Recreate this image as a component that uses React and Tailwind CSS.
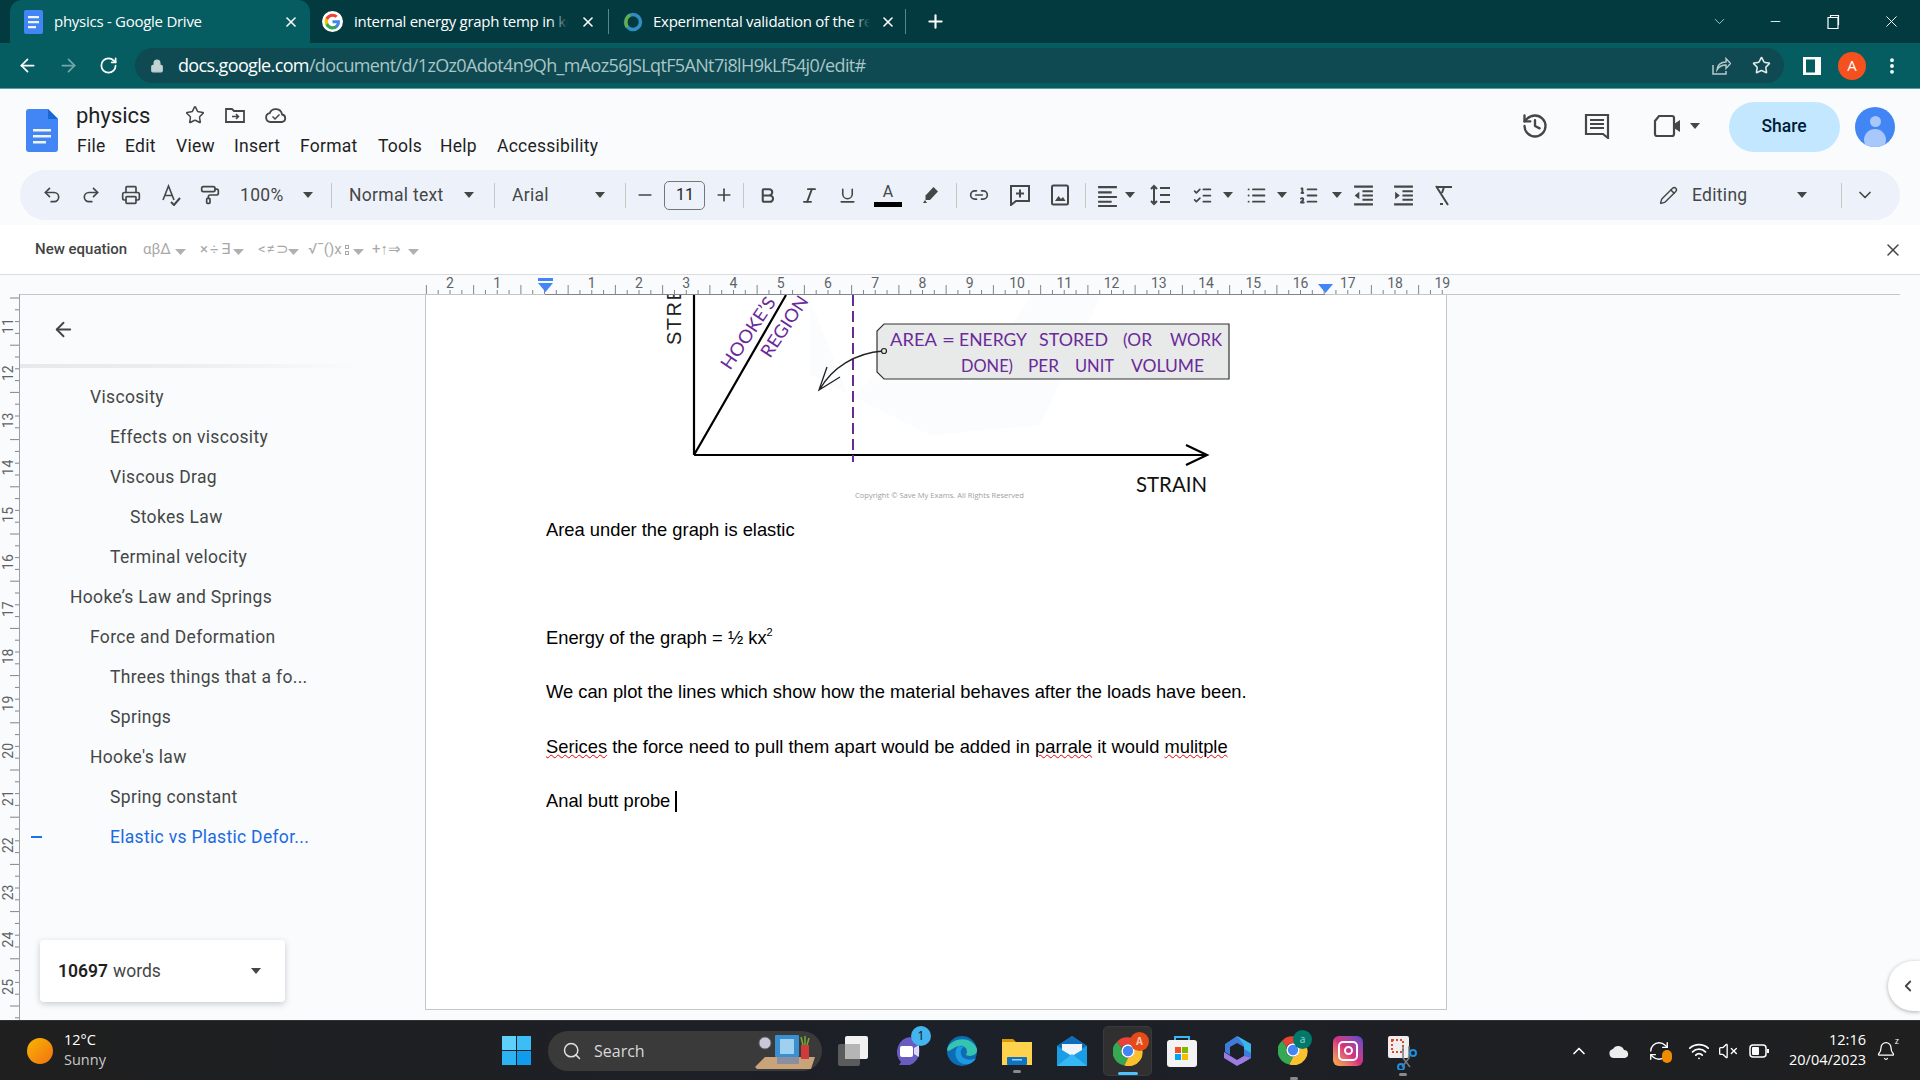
import React from "react";
import {
  ArrowLeft, ArrowRight, RotateCw, Lock, Star, Undo2, Redo2, Printer, Bold, Italic, Underline, Link2,
  Pencil, ChevronDown, X, Plus, Minus, Search, ChevronUp, Wifi, VolumeX, History, MoreVertical,
  ListChecks, List, ListOrdered, PaintRoller, ChevronLeft, Bell, RefreshCw,
} from "lucide-react";

const Caret = ({ className = "" }) => (
  <svg width="10" height="6" viewBox="0 0 10 6" className={`shrink-0 ${className}`}><path d="M0 0h10L5 6z" fill="#444746" /></svg>
);

const DocsGlyph = ({ w, h, tab }) => (
  <svg width={w} height={h} viewBox="0 0 32 43">
    <path d="M3 0h19l10 10v30a3 3 0 0 1-3 3H3a3 3 0 0 1-3-3V3a3 3 0 0 1 3-3z" fill="#4285f4" />
    {tab && <path d="M22 0l10 10H22z" fill="#1967d2" />}
    <path d="M7 20h18v2.600H7zM7 26h18v2.600H7zM7 32h13v2.600H7z" fill="#f1f3f4" />
  </svg>
);

const DriveTabIcon = () => (
  <svg width="19" height="24" viewBox="0 0 19 24" className="translate-x-[1px]">
    <rect width="19" height="24" rx="2" fill="#4285f4" />
    <path d="M4 6h11v2.200H4zM4 11h11v2.200H4zM4 16h8v2.200H4z" fill="#f1f3f4" />
  </svg>
);

const GoogleG = () => (
  <svg width="21" height="21" viewBox="0 0 48 48">
    <circle cx="24" cy="24" r="24" fill="#fff" />
    <path d="M41 24.500c0-1.300-.1-2.500-.3-3.600H24v6.900h9.600c-.4 2.200-1.700 4.100-3.500 5.300v4.400h5.700C39.100 34.400 41 29.900 41 24.500z" fill="#4285f4" />
    <path d="M24 42c4.700 0 8.700-1.600 11.800-4.300l-5.700-4.400c-1.600 1.100-3.600 1.700-6.100 1.700-4.600 0-8.500-3.100-9.900-7.300H8.200v4.600C11.200 38.100 17.100 42 24 42z" fill="#34a853" />
    <path d="M14.100 27.700c-.4-1.100-.6-2.300-.6-3.700s.2-2.500.6-3.700v-4.600H8.200C7 18.100 6.300 21 6.300 24s.7 5.900 1.900 8.300z" fill="#fbbc05" />
    <path d="M24 13c2.600 0 5 .9 6.800 2.700l5.100-5.100C32.800 7.700 28.700 6 24 6 17.100 6 11.200 9.900 8.200 15.700l5.900 4.600C15.500 16.100 19.400 13 24 13z" fill="#ea4335" />
  </svg>
);

const ScienceIcon = () => (
  <svg width="22" height="22" viewBox="0 0 22 22" className="translate-x-[2px]">
    <circle cx="11" cy="11" r="7.500" fill="none" stroke="#2f8fc2" strokeWidth="3.500" />
    <path d="M5 16C3 12 4 6 8 4" fill="none" stroke="#6cae3a" strokeWidth="3" />
  </svg>
);

const Tab = ({ active, icon, title, closeCls, wCls, divider }) => (
  <div className={`relative h-[43px] flex items-center shrink-0 ${wCls} ${active ? "bg-[#055c61] rounded-t-[12px]" : ""}`}>
    <div className="w-[44px] flex justify-center shrink-0">{icon}</div>
    <div className="relative flex-1 min-w-0 overflow-hidden whitespace-nowrap text-[15px] text-white font-['Open_Sans',sans-serif] tracking-[-0.27px]">
      {title}
      {!active && <div className="absolute right-0 top-0 bottom-0 w-[18px] bg-gradient-to-l from-[#033a40] to-transparent" />}
    </div>
    <X size={16} strokeWidth={2.400} className={`text-white shrink-0 ${closeCls}`} />
    {divider && <div className="absolute right-0 top-[9px] w-px h-[25px] bg-[#5c8589]" />}
  </div>
);

const TabStrip = () => (
  <div className="h-[43px] bg-[#033a40] flex pl-[10px] shrink-0">
    <Tab active wCls="w-[300px]" closeCls="mr-[11px] ml-[22px]" title="physics - Google Drive" icon={<DriveTabIcon />} />
    <Tab wCls="w-[299px]" closeCls="mr-[13px] ml-[12px]" divider title="internal energy graph temp in kelvin" icon={<GoogleG />} />
    <Tab wCls="w-[297px]" closeCls="mr-[10px] ml-[10px]" divider title="Experimental validation of the rel" icon={<ScienceIcon />} />
    <div className="w-[58px] flex justify-center items-center"><Plus size={21} strokeWidth={2.400} className="text-white" /></div>
    <div className="flex-1" />
    <ChevronDown size={17} strokeWidth={1.200} className="text-[#c8d6d8] self-center mr-[40px]" />
    <Minus size={15} strokeWidth={1.400} className="text-white self-center mr-[42px]" />
    <svg width="16" height="16" viewBox="0 0 16 16" className="self-center mr-[41px]"><path d="M3 3.500h10v11H3zM5.500 3.500V1.500h8V11" fill="none" stroke="#fff" strokeWidth="1.200" /></svg>
    <X size={19} strokeWidth={1.200} className="text-white self-center mr-[19px]" />
  </div>
);

const ChromeBar = () => (
  <div className="h-[46px] bg-[#055c61] flex items-center shrink-0 border-b border-[#5d9ea0]">
    <ArrowLeft size={21} className="text-white ml-[17px]" strokeWidth={2} />
    <ArrowRight size={21} className="text-[#74a7a9] ml-[20px]" strokeWidth={2} />
    <RotateCw size={19} className="text-white ml-[20px]" strokeWidth={2.200} />
    <div className="ml-[17px] w-[1649px] h-[35px] rounded-full bg-[#0f4a52] flex items-center">
      <Lock size={14} fill="#c3d2d4" className="text-[#c3d2d4] ml-[15px]" strokeWidth={2} />
      <div className="ml-[14px] text-[18px] font-['Open_Sans',sans-serif] tracking-[-0.64px] whitespace-nowrap">
        <span className="text-white">docs.google.com</span><span className="text-[#a9c5c7]">/document/d/1zOz0Adot4n9Qh_mAoz56JSLqtF5ANt7i8lH9kLf54j0/edit#</span>
      </div>
      <div className="flex-1" />
      <svg width="20" height="20" viewBox="0 0 20 20" className="mr-[21px]"><path d="M2 9v9h13v-3" fill="none" stroke="#b8c9cb" strokeWidth="1.500" /><path d="M6 14c0-5 4-8 9-8V2.500l4.500 5-4.500 5V9c-4 0-7 1.500-9 5z" fill="none" stroke="#b8c9cb" strokeWidth="1.400" /></svg>
      <Star size={19} className="text-[#e4ecec] mr-[13px]" strokeWidth={2} />
    </div>
    <svg width="18" height="18" viewBox="0 0 18 18" className="ml-[19px]"><rect width="18" height="18" fill="#fff" /><rect x="3" y="2.500" width="9" height="13" fill="#055c61" /></svg>
    <div className="ml-[17px] w-[28px] h-[28px] rounded-full bg-[#f4511e] text-white text-[15px] flex items-center justify-center font-['Open_Sans',sans-serif]">A</div>
    <MoreVertical size={20} className="text-white ml-[16px]" strokeWidth={2.600} />
  </div>
);

const MENU = [["File", "w-[48px]"], ["Edit", "w-[51px]"], ["View", "w-[58px]"], ["Insert", "w-[66px]"], ["Format", "w-[78px]"], ["Tools", "w-[62px]"], ["Help", "w-[57px]"], ["Accessibility", "w-[112px]"]];

const DocsHeader = () => (
  <div className="h-[81px] flex shrink-0 bg-[#f9fbfd]">
    <div className="ml-[26px] mt-[20px]"><DocsGlyph w={32} h={43} tab /></div>
    <div className="ml-[18px] flex flex-col">
      <div className="flex items-center h-[28px] mt-[12px]">
        <span className="text-[22px] text-[#1f1f1f] font-['Roboto',sans-serif] w-[109px]">physics</span>
        <Star size={20} className="text-[#444746]" strokeWidth={1.800} />
        <svg width="22" height="20" viewBox="0 0 22 20" className="ml-[19px]"><path d="M2 4h6l2 2h10v11H2z" fill="none" stroke="#444746" strokeWidth="1.800" /><path d="M8 11.500h6M12 9l2.500 2.500L12 14" fill="none" stroke="#444746" strokeWidth="1.500" /></svg>
        <svg width="24" height="20" viewBox="0 0 24 20" className="ml-[18px]"><path d="M6.500 17a4.500 4.500 0 0 1-.8-8.900 6.500 6.500 0 0 1 12.400 1.400A3.800 3.800 0 0 1 18 17z" fill="none" stroke="#444746" strokeWidth="1.800" /><path d="M8.500 11.500l2.500 2.500 4.500-4.500" fill="none" stroke="#444746" strokeWidth="1.500" /></svg>
      </div>
      <div className="flex items-center mt-[5px] h-[24px] pl-[1px]">
        {MENU.map(([m, w]) => (
          <span key={m} className={`${w} text-[17.500px] tracking-[0.25px] text-[#1f1f1f] font-['Roboto',sans-serif]`}>{m}</span>
        ))}
      </div>
    </div>
    <div className="flex-1" />
    <div className="flex items-center h-[50px] mt-[13px]">
      <div className="-translate-y-[1px] flex items-center">
        <History size={28} className="text-[#444746]" strokeWidth={2} />
        <svg width="26" height="26" viewBox="0 0 26 26" className="ml-[35px]"><path d="M2 2h22v23l-5-4H2z" fill="none" stroke="#444746" strokeWidth="2.200" /><path d="M6 7h14M6 11h14M6 15h14" stroke="#444746" strokeWidth="2.200" /></svg>
        <svg width="28" height="24" viewBox="0 0 28 24" className="ml-[43px]"><path d="M6 2h13a2 2 0 0 1 2 2v16a2 2 0 0 1-2 2H4a2 2 0 0 1-2-2V7z" fill="none" stroke="#444746" strokeWidth="2.200" /><path d="M21 10l6-4v12l-6-4z" fill="#444746" /></svg>
        <Caret className="ml-[9px]" />
      </div>
      <div className="ml-[29px] w-[111px] h-[50px] rounded-full bg-[#c2e7ff] flex items-center justify-center text-[17.500px] font-medium text-[#001d35] font-['Roboto',sans-serif] pb-[1px] pr-[1px]">Share</div>
      <div className="ml-[15px] w-[40px] h-[40px] rounded-full bg-[#4285f4] relative overflow-hidden">
        <div className="absolute left-[15px] top-[9px] w-[11px] h-[11px] rounded-full bg-[#a8c7fa]" />
        <div className="absolute left-[9px] top-[22px] w-[22px] h-[22px] rounded-full bg-[#a8c7fa]" />
      </div>
    </div>
    <div className="w-[25px]" />
  </div>
);

const C = "#444746";
const I = { size: 20, strokeWidth: 2, className: "text-[#444746]" };
const Slot = ({ w, children }) => <div className={`${w} h-full flex items-center justify-center shrink-0`}>{children}</div>;
const Div = ({ m }) => <div className={`w-px h-[25px] bg-[#c7c7c7] shrink-0 ${m}`} />;
const TXT = "text-[17.500px] tracking-[0.3px] text-[#444746] font-['Roboto',sans-serif]";
const Svg = ({ s = 22, children }) => (
  <svg width={s} height={s} viewBox="0 0 22 22" fill="none" stroke={C} strokeWidth="2">{children}</svg>
);

const Toolbar = () => (
  <div className="h-[55px] shrink-0 bg-[#f9fbfd] px-[20px] pb-[5px]">
    <div className="h-[50px] rounded-[25px] bg-[#edf2fa] flex items-center pl-[13px]">
      <Slot w="w-[38px]"><Undo2 {...I} /></Slot>
      <Slot w="w-[40px]"><Redo2 {...I} /></Slot>
      <Slot w="w-[40px]"><Printer {...I} /></Slot>
      <Slot w="w-[39px]"><Svg><path d="M3 16L8.500 2 14 16M5 11.500h7" strokeWidth="1.600" /><path d="M11 18l3 3 6-7" /></Svg></Slot>
      <Slot w="w-[39px]"><PaintRoller {...I} /></Slot>
      <span className={`${TXT} ml-[11px] w-[63px]`}>100%</span>
      <Caret />
      <Div m="ml-[18px]" />
      <span className={`${TXT} ml-[17px] w-[115px] whitespace-nowrap`}>Normal text</span>
      <Caret />
      <Div m="ml-[20px]" />
      <span className={`${TXT} ml-[17px] w-[83px]`}>Arial</span>
      <Caret />
      <Div m="ml-[20px]" />
      <Slot w="w-[38px]"><Minus {...I} /></Slot>
      <div className="w-[41px] h-[29px] border border-[#747775] rounded-[5px] flex items-center justify-center text-[16px] text-[#1f1f1f] font-['Roboto',sans-serif] shrink-0 pl-[1px]">11</div>
      <Slot w="w-[38px]"><Plus {...I} /></Slot>
      <Div m="" />
      <Slot w="w-[47px]"><Bold size={19} strokeWidth={2.600} className="text-[#444746]" /></Slot>
      <Slot w="w-[36px]"><Italic size={19} strokeWidth={2.400} className="text-[#444746]" /></Slot>
      <Slot w="w-[40px]"><Underline size={19} strokeWidth={2} className="text-[#444746]" /></Slot>
      <div className="w-[42px] h-full flex flex-col items-center justify-center shrink-0">
        <span className="text-[16px] leading-[18px] text-[#444746] font-['Roboto',sans-serif]">A</span>
        <div className="w-[28px] h-[5px] bg-black mt-[1px]" />
      </div>
      <Slot w="w-[42px]"><svg width="20" height="20" viewBox="0 0 20 20"><path d="M13.500 2l4.500 4.500-8 8.500H5.500v-4.500z" fill={C} /><path d="M5 15l-2 3h4z" fill={C} /></svg></Slot>
      <Div m="ml-[5px]" />
      <Slot w="w-[44px]"><Link2 {...I} /></Slot>
      <Slot w="w-[37px]"><Svg><path d="M2 2h18v15H7l-5 4z" /><path d="M11 5.500v8M7 9.500h8" /></Svg></Slot>
      <Slot w="w-[43px]"><Svg><rect x="3" y="1.500" width="16" height="19" rx="1.500" /><path d="M6 17l3.500-5 2.500 3 2-2 2.500 4z" fill={C} stroke="none" /></Svg></Slot>
      <Div m="ml-[4px]" />
      <Slot w="w-[42px]"><Svg s={23}><path d="M2 3h18M2 8h13M2 12.500h18M2 17h13M2 21h18" /></Svg></Slot>
      <Caret className="-ml-[3px]" />
      <Slot w="w-[49px]"><Svg><path d="M5 2v18M2 5l3-3 3 3M2 17l3 3 3-3M11 4h10M11 11h10M11 18h10" /></Svg></Slot>
      <Slot w="w-[36px]"><ListChecks size={21} strokeWidth={2} className="text-[#444746]" /></Slot>
      <Caret className="ml-[3px]" />
      <Slot w="w-[47px]"><List size={21} strokeWidth={2.200} className="text-[#444746]" /></Slot>
      <Caret className="-ml-[3px]" />
      <Slot w="w-[43px]"><ListOrdered size={21} strokeWidth={2.200} className="text-[#444746]" /></Slot>
      <Caret className="ml-[2px]" />
      <Slot w="w-[43px]"><Svg s={23}><path d="M2 2.500h18M10 7h10M10 11h10M10 15h10M2 19.500h18" /><path d="M7 7.500v7L2.500 11z" fill={C} stroke="none" /></Svg></Slot>
      <Slot w="w-[36px]"><Svg s={23}><path d="M2 2.500h18M10 7h10M10 11h10M10 15h10M2 19.500h18" /><path d="M3 7.500v7L7.500 11z" fill={C} stroke="none" /></Svg></Slot>
      <Slot w="w-[43px]"><Svg><path d="M4 3h16M12 3l-2 6M4 2l12 19M8 20h3" /></Svg></Slot>
      <div className="flex-1" />
      <Pencil size={19} strokeWidth={1.800} className="text-[#444746]" />
      <span className={`${TXT} ml-[14px] w-[105px]`}>Editing</span>
      <Caret />
      <Div m="ml-[34px]" />
      <Slot w="w-[46px]"><ChevronDown size={20} strokeWidth={2} className="text-[#444746]" /></Slot>
      <div className="w-[12px]" />
    </div>
  </div>
);

const GREY = "text-[#a8a8a8] text-[15px] leading-none font-['Roboto',sans-serif] whitespace-nowrap";
const GCaret = () => <svg width="11" height="6" viewBox="0 0 11 6" className="mt-[4px] shrink-0"><path d="M0 0h11L5.500 6z" fill="#b0b0b0" /></svg>;
const EquationBar = () => (
  <div className="h-[50px] bg-white border-b border-[#dadce0] flex items-center shrink-0 relative">
    <span className="ml-[35px] text-[15px] font-medium text-[#444] font-['Roboto',sans-serif] w-[108px] whitespace-nowrap">New equation</span>
    <div className="flex items-center w-[57px]"><span className={`${GREY} w-[32px]`}>αβΔ</span><GCaret /></div>
    <div className="flex items-center w-[58px]"><span className={`${GREY} w-[33px] tracking-[2px]`}>×÷∃</span><GCaret /></div>
    <div className="flex items-center w-[50px]"><span className={`${GREY} w-[30px] tracking-[1px]`}>&lt;≠⊃</span><GCaret /></div>
    <div className="flex items-center w-[64px]">
      <span className={`${GREY} w-[37px]`}>√¯()x</span>
      <span className="w-[8px] flex flex-col gap-[2px] mr-[0px]"><span className="block w-[4px] h-[4px] border border-[#a8a8a8]" /><span className="block w-[4px] h-[4px] border border-[#a8a8a8]" /></span>
      <GCaret />
    </div>
    <div className="flex items-center"><span className={`${GREY} w-[36px]`}>+↑⇒</span><GCaret /></div>
    <div className="flex-1" />
    <X size={20} strokeWidth={1.800} className="text-[#444746] mr-[17px]" />
  </div>
);

const HRuler = () => {
  const ticks = [];
  for (let i = -10; i <= 76; i++) {
    const x = 544.5 + i * 11.8125;
    const mod = ((i % 4) + 4) % 4;
    ticks.push(<line key={i} x1={x} x2={x} y1={19} y2={mod === 2 ? 10 : 15} stroke="#80868b" strokeWidth="1" />);
  }
  const labels = [];
  for (let n = -2; n <= 19; n++) {
    if (n === 0) continue;
    labels.push(<text key={n} x={544.5 + n * 47.25} y={12.500} fontSize="14" textAnchor="middle" fill="#5f6368" fontFamily="Roboto, sans-serif">{Math.abs(n)}</text>);
  }
  return (
    <div className="h-[19px] bg-[#f9fbfd] shrink-0 relative">
      <svg width="1920" height="20" viewBox="0 0 1920 20" className="block absolute left-0 top-0 z-10">
        {ticks}
        {labels}
        <line x1="20" x2="1900" y1="19.500" y2="19.500" stroke="#c4c7c5" />
        <line x1="545" x2="1325" y1="19.500" y2="19.500" stroke="#80868b" />
        <rect x="538" y="3" width="15" height="3" fill="#4285f4" />
        <path d="M538 8h15l-7.500 9z" fill="#4285f4" />
        <path d="M1318 9h15l-7.500 9z" fill="#4285f4" />
      </svg>
    </div>
  );
};

const VRuler = () => {
  const ticks = [];
  for (let i = 0; i < 62; i++) {
    const y = 4 + i * 11.8;
    const mod = i % 4;
    ticks.push(<line key={i} y1={y} y2={y} x1={mod === 0 ? 10 : 15} x2={19} stroke="#80868b" />);
  }
  const labels = [];
  for (let n = 11; n <= 25; n++) {
    const y = 32 + (n - 11) * 47.2;
    labels.push(<text key={n} x={0} y={0} transform={`translate(13 ${y}) rotate(-90)`} fontSize="14" textAnchor="middle" fill="#5f6368" fontFamily="Roboto, sans-serif">{n}</text>);
  }
  return (
    <svg width="20" height="726" viewBox="0 0 20 726" className="block shrink-0 bg-[#f9fbfd]">
      {ticks}
      {labels}
      <line x1="19.500" x2="19.500" y1="0" y2="726" stroke="#9aa0a6" />
    </svg>
  );
};

const OUTLINE = [
  ["Viscosity", "ml-[70px]"],
  ["Effects on viscosity", "ml-[90px]"],
  ["Viscous Drag", "ml-[90px]"],
  ["Stokes Law", "ml-[110px]"],
  ["Terminal velocity", "ml-[90px]"],
  ["Hooke’s Law and Springs", "ml-[50px]"],
  ["Force and Deformation", "ml-[70px]"],
  ["Threes things that a fo...", "ml-[90px]"],
  ["Springs", "ml-[90px]"],
  ["Hooke's law", "ml-[70px]"],
  ["Spring constant", "ml-[90px]"],
];

const Sidebar = () => (
  <div className="w-[405px] h-full shrink-0 bg-[#f9fbfd] flex flex-col relative">
    <div className="h-[70px] flex items-center pl-[32px]"><ArrowLeft size={23} strokeWidth={2} className="text-[#444746]" /></div>
    <div className="h-[4px] w-[340px] bg-gradient-to-r from-[#e6e8ea] via-[#eceef0] to-[#f9fbfd]" />
    <div className="flex flex-col mt-[9px]">
      {OUTLINE.map(([t, m]) => (
        <div key={t} className={`h-[40px] flex items-center text-[17.500px] tracking-[0.33px] text-[#444746] font-['Roboto',sans-serif] whitespace-nowrap ${m}`}>{t}</div>
      ))}
      <div className="h-[40px] flex items-center">
        <div className="ml-[11px] w-[11px] h-[2px] bg-[#1a73e8]" />
        <span className="ml-[68px] text-[17.500px] tracking-[0.3px] text-[#1a6ae0] font-['Roboto',sans-serif] whitespace-nowrap">Elastic vs Plastic Defor...</span>
      </div>
    </div>
    <div className="flex-1" />
    <div className="ml-[20px] mb-[18px] w-[245px] h-[62px] rounded-[4px] bg-white shadow-[0_2px_6px_rgba(60,64,67,0.25)] flex items-center pl-[18px] pr-[24px] font-['Roboto',sans-serif] text-[17.500px] text-[#444746]">
      <span className="font-semibold text-[#1f1f1f]">10697</span><span className="ml-[5px]">words</span>
      <div className="flex-1" />
      <Caret />
    </div>
  </div>
);

const LBL = { fontFamily: "Lato, 'Open Sans', sans-serif", fill: "#6a2a9a", fontSize: 18, lengthAdjust: "spacingAndGlyphs" };
const WORDS = [
  ["AREA", 890, 47, 346], ["=", 942, 13, 346], ["ENERGY", 959, 68, 346], ["STORED", 1039, 69, 346], ["(OR", 1123, 29, 346], ["WORK", 1170, 52, 346],
  ["DONE)", 961, 52, 372], ["PER", 1028, 31, 372], ["UNIT", 1075, 39, 372], ["VOLUME", 1131, 73, 372],
];

const Diagram = () => (
  <svg width="1021" height="210" viewBox="425 294 1021 210" className="block absolute left-[-1px] top-0">
    <path d="M810 300l40 100 60-60 60 45 90-130 60 0-80 170-110 10-120-60z" fill="#fbfcfd" />
    <text transform="translate(681 345) rotate(-90)" fontSize="20" letterSpacing="1.500" fontFamily="'Liberation Sans', sans-serif" fill="#222">STRE</text>
    <path d="M694 295V455M694 455L786 295M694 455H1207M1186 445l21 10-21 10" fill="none" stroke="#000" strokeWidth="2.200" />
    <line x1="853" x2="853" y1="295" y2="462" stroke="#6a2a9a" strokeWidth="2" strokeDasharray="11 5" />
    <text transform="translate(730 371) rotate(-56)" textLength="83" {...LBL}>HOOKE’S</text>
    <text transform="translate(770 359) rotate(-56)" textLength="70" {...LBL}>REGION</text>
    <path d="M884 324H1229V379H884L877 372V331z" fill="#e8e9e9" stroke="#333" strokeWidth="1.200" />
    {WORDS.map(([t, x, w, y]) => <text key={t} x={x} y={y} textLength={w} {...LBL}>{t}</text>)}
    <path d="M883 351C855 353 832 368 820 389M827 367L819 390L840 377" fill="none" stroke="#222" strokeWidth="1.300" />
    <circle cx="884" cy="351" r="2.500" fill="#e8e9e9" stroke="#222" strokeWidth="1.200" />
    <text x="1136" y="492" fontSize="21" textLength="71" lengthAdjust="spacingAndGlyphs" fontFamily="Lato, sans-serif" fill="#111">STRAIN</text>
    <text x="855" y="498" fontSize="7.500" textLength="169" lengthAdjust="spacingAndGlyphs" fontFamily="'Open Sans', sans-serif" fill="#a0a0a0">Copyright © Save My Exams. All Rights Reserved</text>
  </svg>
);

const WAVY = "underline decoration-wavy decoration-[#e00] decoration-1";

const Canvas = () => (
  <div className="flex-1 h-full bg-[#f9fbfd] relative min-w-0">
    <div className="w-[1022px] h-[716px] bg-white border-x border-b border-[#c7c7c7] relative font-['Liberation_Sans',sans-serif] text-[18.330px] text-black">
      <Diagram />
      <div className="pl-[120px] pt-[225px] flex flex-col relative">
        <div className="h-[22px] leading-[22px]">Area under the graph is elastic</div>
        <div className="h-[22px] leading-[22px] mt-[86px]">Energy of the graph = ½ kx<sup className="text-[11px] top-[-8px]">2</sup></div>
        <div className="h-[22px] leading-[22px] mt-[32px]">We can plot the lines which show how the material behaves after the loads have been.</div>
        <div className="h-[22px] leading-[22px] mt-[33px]">
          <span className={WAVY}>Serices</span> the force need to pull them apart would be added in <span className={WAVY}>parrale</span> it would <span className={WAVY}>mulitple</span>
        </div>
        <div className="h-[22px] leading-[22px] mt-[32px] flex items-center">Anal butt probe <span className="ml-[5px] w-[2px] h-[21px] bg-black inline-block" /></div>
      </div>
    </div>
    <div className="absolute right-0 top-[667px] w-[32px] h-[50px] bg-white rounded-l-full shadow-[0_1px_4px_rgba(0,0,0,0.3)] flex items-center justify-end pr-[3px]">
      <ChevronLeft size={18} strokeWidth={2.400} className="text-[#444746]" />
    </div>
  </div>
);

const Chrome = ({ size = 44 }) => (
  <svg width={size} height={size} viewBox="0 0 48 48">
    <path d="M24 2a22 22 0 0 1 19 11H24a11 11 0 0 0-10 6L6.500 9A22 22 0 0 1 24 2z" fill="#ea4335" />
    <path d="M6.500 9L14 19a11 11 0 0 0 10 16l-6 12A22 22 0 0 1 6.500 9z" fill="#34a853" />
    <path d="M43 13a22 22 0 0 1-25 34l6-12a11 11 0 0 0 9-16z" fill="#fbc02d" />
    <circle cx="24" cy="24" r="9.500" fill="#4285f4" stroke="#fff" strokeWidth="2.500" />
  </svg>
);
const Dot = () => <div className="absolute left-1/2 -translate-x-1/2 bottom-[-8px] w-[8px] h-[3px] rounded-full bg-[#8a8a8a]" />;

const Taskbar = () => (
  <div className="h-[60px] shrink-0 bg-gradient-to-r from-[#1f1f1f] via-[#1c2028] to-[#1f1f1f] border-t border-[#333] flex items-center relative">
    <div className="ml-[27px] w-[26px] h-[26px] rounded-full bg-gradient-to-br from-[#f7b500] to-[#f07010]" />
    <div className="ml-[11px] w-[110px] text-[14.500px] leading-[20px] font-['Open_Sans',sans-serif] -translate-y-[1px]">
      <div className="text-white">12°C</div>
      <div className="text-[#c9c9c9]">Sunny</div>
    </div>
    <div className="ml-[328px] w-[29px] h-[29px] grid grid-cols-2 gap-[1.500px] shrink-0">
      <div className="bg-[#5fd0f8]" /><div className="bg-[#3dbdf5]" /><div className="bg-[#2db3f3]" /><div className="bg-[#0f9cec]" />
    </div>
    <div className="ml-[17px] w-[274px] h-[40px] rounded-full bg-[#3a3a3a] flex items-center pl-[14px] relative shrink-0">
      <Search size={20} strokeWidth={1.800} className="text-[#e0e0e0]" />
      <span className="ml-[12px] text-[16px] text-[#d8d8d8] font-['Open_Sans',sans-serif]">Search</span>
      <svg width="66" height="40" viewBox="0 0 66 40" className="absolute right-[5px] top-0">
        <path d="M4 36L14 26H64L60 38H6z" fill="#c9a47a" />
        <rect x="24" y="4" width="24" height="22" rx="1" fill="#3a8fd0" /><rect x="29" y="8" width="14" height="15" fill="#9fd0f0" />
        <rect x="26" y="26" width="22" height="7" fill="#8a8fa0" />
        <circle cx="14" cy="12" r="6" fill="#c8c8d8" stroke="#666" /><rect x="50" y="14" width="8" height="14" fill="#d03a3a" />
        <path d="M52 14l-2-8M54 14V5M56 14l2-7" stroke="#7a3" strokeWidth="1.500" />
      </svg>
    </div>
    <svg width="30" height="30" viewBox="0 0 30 30" className="ml-[16px] shrink-0"><rect x="0" y="8" width="22" height="22" rx="2" fill="#5b5b5b" /><rect x="7" y="0" width="23" height="23" rx="2" fill="#f1f1f1" /><rect x="7" y="8" width="15" height="15" fill="#b5b5b5" /></svg>
    <div className="ml-[26px] relative w-[36px] h-[36px] shrink-0">
      <svg width="32" height="36" viewBox="0 0 32 36" className="absolute left-0 top-0"><path d="M16 4a15 15 0 0 1 0 28H5l2-3A15 15 0 0 1 16 4z" fill="#6a5bc2" /><rect x="6" y="13" width="13" height="11" rx="2" fill="#fff" /><path d="M20 15l5-3v12l-5-3z" fill="#dcd8f5" /></svg>
      <div className="absolute right-[-1px] top-[-7px] w-[20px] h-[20px] rounded-full bg-[#43b4ee] text-[#111] text-[12px] flex items-center justify-center font-['Open_Sans',sans-serif]">1</div>
    </div>
    <svg width="32" height="32" viewBox="0 0 32 32" className="ml-[16px] shrink-0"><circle cx="16" cy="16" r="15" fill="#0c6db5" /><path d="M1 15C3 3 25 -1 31 14c1 7-8 8-11 6 3-6-2-10-7-9-6 1-10 7-12 4z" fill="#36c4b0" /><path d="M13 11c-5 3-5 13 2 17 6 3 13 0 15-5-5 3-14 2-15-4-1-4 1-6 3-7z" fill="#1e9be0" /></svg>
    <div className="ml-[24px] relative w-[30px] h-[28px] shrink-0">
      <svg width="30" height="28" viewBox="0 0 30 28" className="block"><path d="M0 2h11l3 3H0z" fill="#d99a00" /><rect x="0" y="5" width="30" height="23" fill="#ffd24d" /><rect x="5" y="20" width="20" height="8" rx="1" fill="#0f73c4" /><rect x="10" y="22" width="10" height="1.500" fill="#9fd0f0" /></svg>
      <Dot />
    </div>
    <svg width="30" height="30" viewBox="0 0 30 30" className="ml-[25px] shrink-0"><path d="M0 10L15 0l15 10v20H0z" fill="#1b9de2" /><path d="M0 10L15 0l15 10-15 8z" fill="#0f6cbd" /><path d="M5 8h20v6l-10 6-10-6z" fill="#eef5fa" /><path d="M0 30l15-12 15 12z" fill="#35b8f5" /></svg>
    <div className="ml-[16px] w-[49px] h-[50px] rounded-[5px] bg-[#303030] border border-[#3a3a3a] flex items-center justify-center relative shrink-0">
      <Chrome size={30} />
      <div className="absolute right-[2px] top-[5px] w-[19px] h-[19px] rounded-full bg-[#e64a19] text-[#f7c9b5] text-[10px] flex items-center justify-center font-bold font-['Open_Sans',sans-serif]">A</div>
      <div className="absolute left-[14px] bottom-[0px] w-[20px] h-[3px] rounded-full bg-[#4cc2ff]" />
    </div>
    <svg width="30" height="32" viewBox="0 0 30 32" className="ml-[15px] shrink-0"><path d="M8 5V2h14v3" fill="none" stroke="#3bb7f0" strokeWidth="2" /><rect y="5" width="30" height="27" rx="3" fill="#f3f3f3" /><rect x="8" y="12" width="6" height="6" fill="#f25022" /><rect x="15" y="12" width="6" height="6" fill="#7fba00" /><rect x="8" y="19" width="6" height="6" fill="#00a4ef" /><rect x="15" y="19" width="6" height="6" fill="#ffb900" /></svg>
    <svg width="27" height="30" viewBox="0 0 27 30" className="ml-[27px] shrink-0"><path d="M13 0l14 8v14l-10 6-5-3 8-5V11l-7-4-7 4v8l-5-3V8z" fill="#3f7bd8" /><path d="M0 16l13 8 7-4 7 2-14 8L0 22z" fill="#9d7be0" /><path d="M13 0l14 8v9l-7-4V9z" fill="#37b8e8" /></svg>
    <div className="ml-[27px] relative w-[32px] h-[32px] shrink-0">
      <Chrome size={30} />
      <div className="absolute left-[15px] top-[-5px] w-[19px] h-[19px] rounded-full bg-[#00796b] text-[#a7d8d0] text-[10px] flex items-center justify-center font-['Open_Sans',sans-serif]">a</div>
      <div className="absolute left-1/2 -translate-x-1/2 bottom-[-13px] w-[8px] h-[3px] rounded-full bg-[#8a8a8a]" />
    </div>
    <div className="ml-[23px] w-[30px] h-[30px] rounded-[6px] bg-gradient-to-tr from-[#f9b233] via-[#d62d7e] to-[#5b3fd0] flex items-center justify-center shrink-0">
      <div className="w-[20px] h-[20px] rounded-[5px] border-2 border-white flex items-center justify-center"><div className="w-[9px] h-[9px] rounded-full border-2 border-white" /></div>
    </div>
    <div className="ml-[25px] relative w-[30px] h-[30px] shrink-0">
      <svg width="32" height="34" viewBox="0 0 32 34" className="block"><rect width="21" height="22" rx="2" fill="#eeeeee" /><rect x="4" y="4" width="11" height="12" fill="none" stroke="#e8432a" strokeWidth="2" strokeDasharray="2 2" /><path d="M15 10v12l7 9M21 10v12l-7 9" stroke="#7a7a7a" strokeWidth="1.500" fill="none" /><circle cx="25" cy="17" r="3" fill="none" stroke="#1c8fe0" strokeWidth="2" /><circle cx="13" cy="31" r="3" fill="none" stroke="#1c8fe0" strokeWidth="2" /></svg>
      <div className="absolute left-1/2 -translate-x-1/2 bottom-[-10px] w-[8px] h-[3px] rounded-full bg-[#8a8a8a]" />
    </div>
    <div className="flex-1" />
    <ChevronUp size={20} strokeWidth={2} className="text-white mr-[19px]" />
    <svg width="22" height="16" viewBox="0 0 22 16" className="mr-[18px]"><path d="M6 15a4.500 4.500 0 0 1-1-8.900 6 6 0 0 1 11 1A4 4 0 0 1 17 15z" fill="#ededed" /></svg>
    <div className="relative mr-[18px]">
      <RefreshCw size={22} strokeWidth={1.500} className="text-white" />
      <div className="absolute right-[-2px] bottom-[-1px] w-[10px] h-[13px] rounded-full bg-[#f08a00]" />
    </div>
    <Wifi size={22} strokeWidth={2} className="text-white mr-[8px]" />
    <VolumeX size={20} strokeWidth={1.600} className="text-white mr-[11px]" />
    <svg width="20" height="14" viewBox="0 0 20 14" className="mr-[20px]"><rect x="1" y="1" width="16" height="12" rx="3" fill="none" stroke="#fff" strokeWidth="1.500" /><rect x="3" y="3" width="7" height="8" rx="1" fill="#fff" /><rect x="18" y="5" width="2" height="4" fill="#fff" /></svg>
    <div className="text-right text-[14.500px] leading-[20px] text-white font-['Open_Sans',sans-serif] -translate-y-[1px]">
      <div>12:16</div>
      <div>20/04/2023</div>
    </div>
    <div className="relative ml-[10px] mr-[24px]">
      <Bell size={20} strokeWidth={1.500} className="text-white" />
      <span className="absolute right-[-3px] top-[-5px] text-[9px] leading-[10px] text-white font-['Open_Sans',sans-serif]">z</span>
    </div>
  </div>
);

export default function App() {
  return (
    <div className="w-[1920px] h-[1080px] flex flex-col overflow-hidden bg-[#f9fbfd]">
      <TabStrip />
      <ChromeBar />
      <DocsHeader />
      <Toolbar />
      <EquationBar />
      <HRuler />
      <div className="h-[726px] flex overflow-hidden">
        <VRuler />
        <Sidebar />
        <Canvas />
      </div>
      <Taskbar />
    </div>
  );
}
